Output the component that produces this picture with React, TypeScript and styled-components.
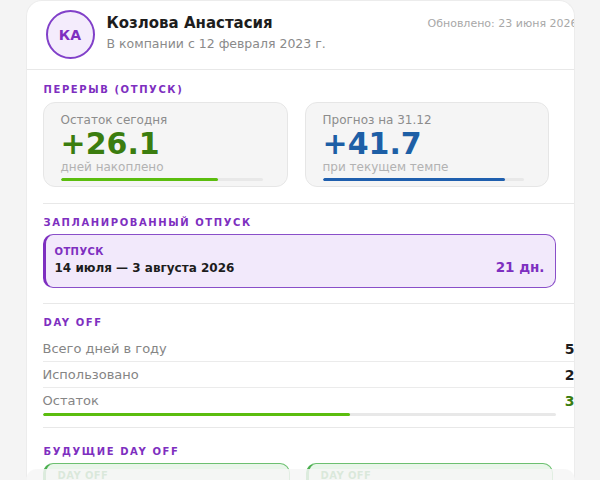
import React from "react";
import styled, { createGlobalStyle } from "styled-components";

const Global = createGlobalStyle`
  body {
    margin: 0;
    background: #f4f4f4;
    font-family: "DejaVu Sans", "Noto Sans", sans-serif;
  }
`;

const Card = styled.div`
  width: 549px;
  margin: 0 auto;
  background: #fff;
  border: 1px solid #ececec;
  border-bottom: none;
  border-radius: 16px 16px 0 0;
  overflow: hidden;
  box-sizing: border-box;
  min-height: 480px;
`;

const Header = styled.div`
  display: flex;
  align-items: flex-start;
  gap: 12px;
  padding: 9px 0 10px 19px;
  border-bottom: 1px solid #e8e8e8;
`;

const Avatar = styled.div`
  width: 45px;
  height: 45px;
  flex: none;
  border-radius: 50%;
  border: 2px solid #8140c9;
  background: #f4ecfc;
  color: #7e2fc0;
  font-weight: 700;
  font-size: 14px;
  display: flex;
  align-items: center;
  justify-content: center;
`;

const Who = styled.div`
  flex: 1;
  padding-top: 3px;
`;

const Name = styled.div`
  font-size: 15px;
  font-weight: 700;
  color: #1d1d1d;
  line-height: 20px;
`;

const Since = styled.div`
  font-size: 12.5px;
  color: #8a8a8a;
  margin-top: 3px;
`;

const Updated = styled.div`
  font-size: 11px;
  color: #a8a8a8;
  padding-top: 7px;
  white-space: nowrap;
  margin-right: -4px;
`;

const Section = styled.div<{ $top?: number; $bottom?: number; $last?: boolean }>`
  margin-left: 16px;
  padding: ${(p) => p.$top ?? 13}px 0 ${(p) => p.$bottom ?? 15}px;
  border-bottom: ${(p) => (p.$last ? "none" : "1px solid #e8e8e8")};
`;

const Title = styled.div`
  font-size: 10px;
  font-weight: 700;
  letter-spacing: 1.6px;
  color: #7e2fc0;
  margin-bottom: 6px;
  padding-left: 1px;
`;

const Stats = styled.div`
  display: grid;
  grid-template-columns: 245px 244px;
  gap: 17px;
  padding-top: 1px;
`;

const Stat = styled.div`
  background: #f5f5f5;
  border: 1px solid #e6e6e6;
  border-radius: 12px;
  padding: 10px 24px 5px 17px;
`;

const StatLabel = styled.div`
  font-size: 12px;
  color: #8c8c8c;
`;

const StatValue = styled.div<{ $color: string }>`
  font-size: 30px;
  font-weight: 700;
  line-height: 32px;
  margin-top: 1px;
  color: ${(p) => p.$color};
`;

const StatHint = styled.div`
  font-size: 12px;
  color: #b2b2b2;
  margin-bottom: 4px;
`;

const Track = styled.div`
  height: 3px;
  background: #e8e8e8;
  border-radius: 2px;
  overflow: hidden;
`;

const Fill = styled.div<{ $color: string }>`
  height: 100%;
  background: ${(p) => p.$color};
  border-radius: 2px;
`;

const Vacation = styled.div`
  margin-right: 18px;
  background: #f2e9fb;
  border: 1px solid #8a4fc9;
  border-left: 3px solid #7e2fc0;
  border-radius: 10px;
  padding: 11px 10px 12px 9px;
  display: flex;
  justify-content: space-between;
  align-items: flex-end;
`;

const TagLabel = styled.div<{ $color: string }>`
  font-size: 10px;
  font-weight: 700;
  letter-spacing: 0.4px;
  color: ${(p) => p.$color};
  margin-bottom: 4px;
`;

const Dates = styled.div`
  font-size: 12px;
  font-weight: 700;
  color: #1d1d1d;
`;

const Days = styled.div`
  font-size: 13.5px;
  font-weight: 700;
  color: #7e2fc0;
`;

const Rows = styled.div`
  padding-top: 2px;
`;

const Row = styled.div`
  display: flex;
  justify-content: space-between;
  align-items: center;
  height: 25px;
  border-bottom: 1px solid #ebebeb;
  font-size: 13px;
  color: #858585;
  &:last-of-type {
    border-bottom: none;
  }
`;

const RowValue = styled.span<{ $color?: string }>`
  font-size: 14px;
  font-weight: 700;
  color: ${(p) => p.$color || "#1d1d1d"};
  margin-right: -1px;
`;

const BarWrap = styled.div`
  margin: 0 18px 0 0;
`;

const Future = styled.div`
  display: grid;
  grid-template-columns: 247px 247px;
  gap: 16px;
`;

const DayOffBox = styled.div`
  height: 40px;
  background: #e9f6ea;
  border: 1px solid #6cc070;
  border-left: 3px solid #4caf50;
  border-radius: 10px;
  padding: 6px 12px;
`;

const BottomSheet = styled.div`
  position: fixed;
  left: 26px;
  right: 25px;
  bottom: 0;
  height: 11px;
  background: rgba(246, 246, 246, 0.85);
  border-radius: 14px 14px 0 0;
`;

export default function App() {
  return (
    <>
      <Global />
      <Card>
        <Header>
          <Avatar>КА</Avatar>
          <Who>
            <Name>Козлова Анастасия</Name>
            <Since>В компании с 12 февраля 2023 г.</Since>
          </Who>
          <Updated>Обновлено: 23 июня 2026</Updated>
        </Header>

        <Section $top={14} $bottom={16}>
          <Title>ПЕРЕРЫВ (ОТПУСК)</Title>
          <Stats>
            <Stat>
              <StatLabel>Остаток сегодня</StatLabel>
              <StatValue $color="#3b7d0f">+26.1</StatValue>
              <StatHint>дней накоплено</StatHint>
              <Track>
                <Fill $color="#5bbd0e" style={{ width: "78%" }} />
              </Track>
            </Stat>
            <Stat>
              <StatLabel>Прогноз на 31.12</StatLabel>
              <StatValue $color="#1d5fa6">+41.7</StatValue>
              <StatHint>при текущем темпе</StatHint>
              <Track>
                <Fill $color="#1f5fae" style={{ width: "91%" }} />
              </Track>
            </Stat>
          </Stats>
        </Section>

        <Section $bottom={15}>
          <Title>ЗАПЛАНИРОВАННЫЙ ОТПУСК</Title>
          <Vacation>
            <div>
              <TagLabel $color="#7e2fc0">ОТПУСК</TagLabel>
              <Dates>14 июля — 3 августа 2026</Dates>
            </div>
            <Days>21 дн.</Days>
          </Vacation>
        </Section>

        <Section $bottom={11}>
          <Title>DAY OFF</Title>
          <Rows>
            <Row>
              <span>Всего дней в году</span>
              <RowValue>5</RowValue>
            </Row>
            <Row>
              <span>Использовано</span>
              <RowValue>2</RowValue>
            </Row>
            <Row>
              <span>Остаток</span>
              <RowValue $color="#3b7d0f">3</RowValue>
            </Row>
          </Rows>
          <BarWrap>
            <Track>
              <Fill $color="#5bbd0e" style={{ width: "60%" }} />
            </Track>
          </BarWrap>
        </Section>

        <Section $top={18} $last>
          <Title>БУДУЩИЕ DAY OFF</Title>
          <Future>
            <DayOffBox>
              <TagLabel $color="#3f9a43">DAY OFF</TagLabel>
            </DayOffBox>
            <DayOffBox>
              <TagLabel $color="#3f9a43">DAY OFF</TagLabel>
            </DayOffBox>
          </Future>
        </Section>
      </Card>
      <BottomSheet />
    </>
  );
}
